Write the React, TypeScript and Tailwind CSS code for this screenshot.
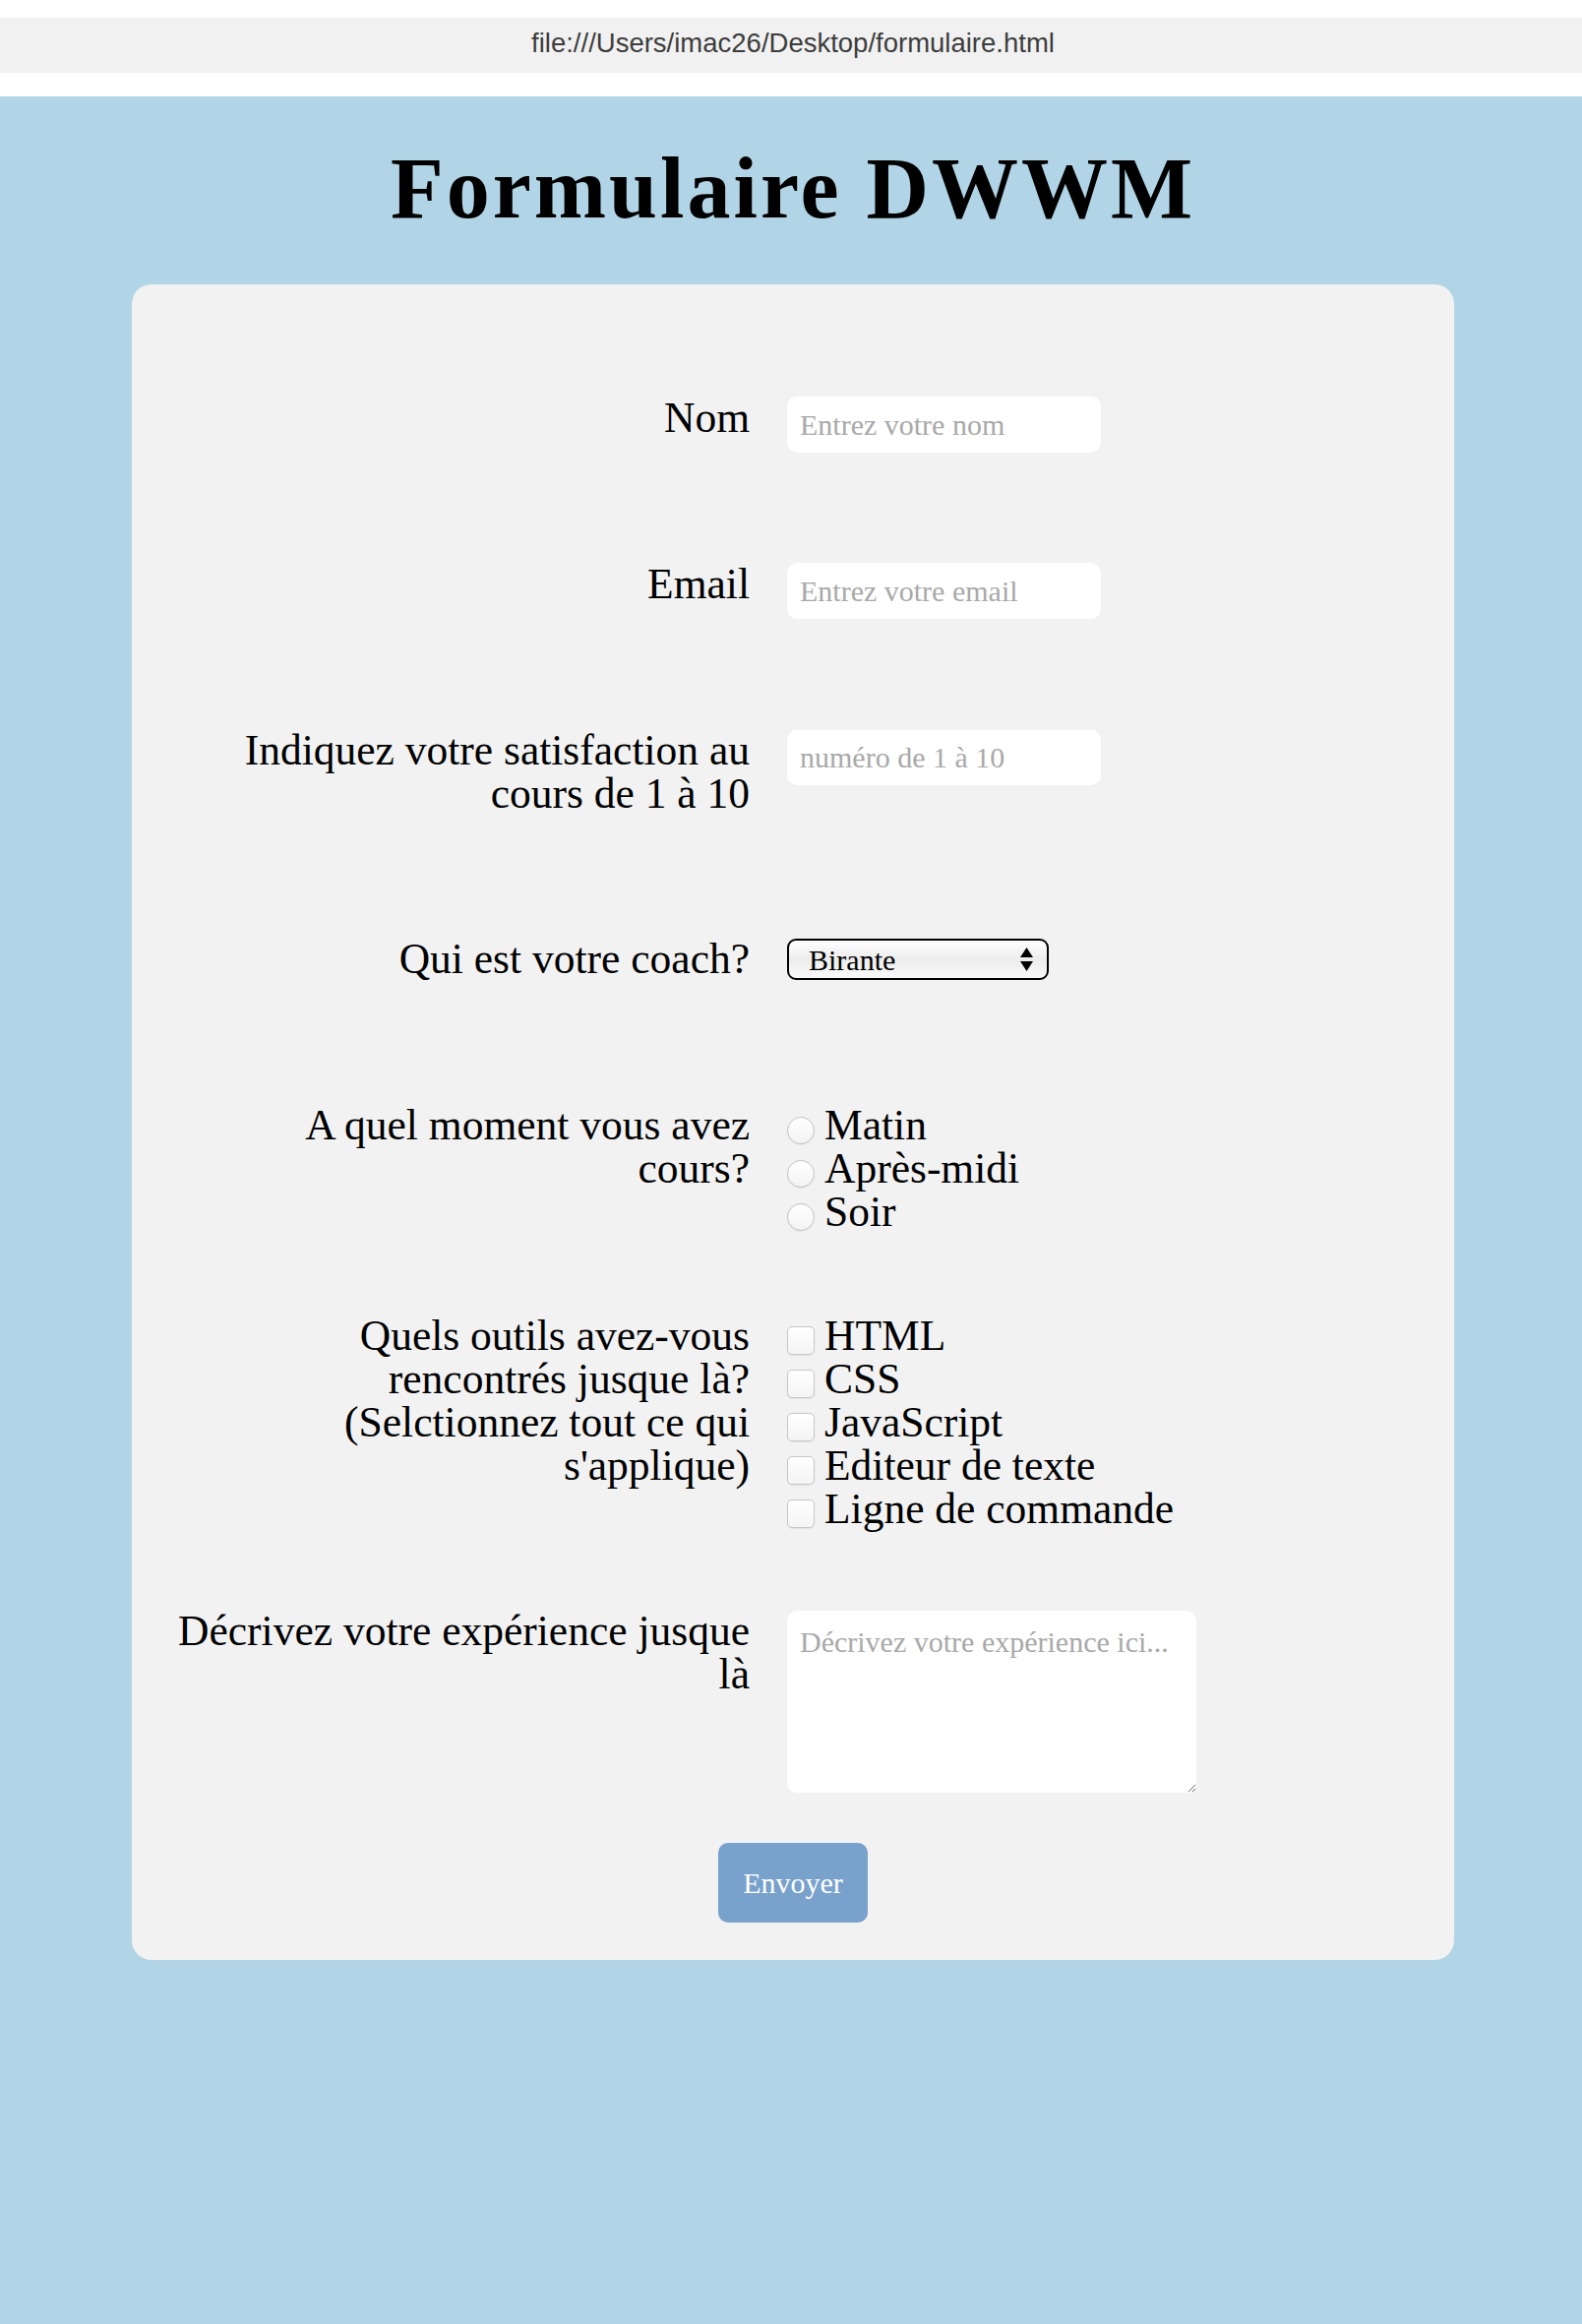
import React from "react";

const Row = ({ label, className, children }: { label: React.ReactNode; className: string; children: React.ReactNode }) => {
    return (
        <div className={"flex items-start gap-[38px] " + className}>
            <label className="w-[600px] ml-[28px] shrink-0 text-right text-[43.5px] leading-[44px] text-black">{label}</label>
            <div>{children}</div>
        </div>
    )
}

const Radio = ({ text }: { text: string }) => {
    return (
        <label className="flex items-start text-[43.5px] leading-[44px]">
            <span className="mt-[14px] w-[28px] h-[28px] shrink-0 rounded-full border border-[#c2c2c2] bg-linear-to-b from-white to-[#f3f3f3] shadow-[0_1px_1px_rgba(0,0,0,0.06)]" />
            <span className="ml-[10px]">{text}</span>
        </label>
    )
}

const Check = ({ text }: { text: string }) => {
    return (
        <label className="flex items-start text-[43.5px] leading-[44px] whitespace-nowrap">
            <span className="mt-[13px] w-[28px] h-[29px] shrink-0 rounded-[5px] border border-[#c6c6c6] bg-linear-to-b from-white to-[#f4f4f4] shadow-[0_1px_1px_rgba(0,0,0,0.06)]" />
            <span className="ml-[10px]">{text}</span>
        </label>
    )
}

const App = () => {
    return (
        <div className="min-h-[2362px] bg-[#b1d5e6] font-['Liberation_Serif',serif] text-black">

            <div className="bg-white pt-[18px] pb-[24px]">
                <div className="h-[56px] bg-[#f1f1f1] flex items-center justify-center pl-[4px] pb-[4px] text-[27.5px] font-['Liberation_Sans',sans-serif] text-[#3d3d3d]">
                    file:///Users/imac26/Desktop/formulaire.html
                </div>
            </div>

            <div className="w-[1344px] ml-[134px] pt-[50px]">
                <h1 className="text-center text-[88px] leading-none font-bold tracking-[3px]">Formulaire DWWM</h1>

                <form className="mt-[53px] bg-[#f2f2f2] rounded-[20px] pt-[113px] pb-[38px]">

                    <Row label="Nom" className="mb-[111px]">
                        <input placeholder="Entrez votre nom" className="mt-[1px] w-[319px] h-[57px] rounded-[10px] bg-white px-[13px] text-[30px] outline-none placeholder:text-[#a9a9a9]" />
                    </Row>

                    <Row label="Email" className="mb-[111px]">
                        <input placeholder="Entrez votre email" className="mt-[1px] w-[319px] h-[57px] rounded-[10px] bg-white px-[13px] text-[30px] outline-none placeholder:text-[#a9a9a9]" />
                    </Row>

                    <Row label={<>Indiquez votre satisfaction au<br />cours de 1 à 10</>} className="mb-[124px]">
                        <input placeholder="numéro de 1 à 10" className="mt-[2px] w-[319px] h-[56px] rounded-[10px] bg-white px-[13px] text-[30px] outline-none placeholder:text-[#a9a9a9]" />
                    </Row>

                    <Row label="Qui est votre coach?" className="mb-[125px]">
                        <div className="mt-[2px] w-[266px] h-[42px] rounded-[9px] border-[2.5px] border-black bg-linear-to-b from-white via-[#ececec] to-[#fafafa] flex items-center justify-between pl-[20px] pr-[13px] text-[30px] leading-none">
                            <span className="pt-[1px]">Birante</span>
                            <svg width="15" height="26" viewBox="0 0 15 26">
                                <path d="M7.5 1 L14 11 L1 11 Z" fill="#000" />
                                <path d="M1 15 L14 15 L7.5 25 Z" fill="#000" />
                            </svg>
                        </div>
                    </Row>

                    <Row label={<>A quel moment vous avez<br />cours?</>} className="mb-[82px]">
                        <Radio text="Matin" />
                        <Radio text="Après-midi" />
                        <Radio text="Soir" />
                    </Row>

                    <Row label={<>Quels outils avez-vous<br />rencontrés jusque là?<br />(Selctionnez tout ce qui<br />s'applique)</>} className="mb-[80px]">
                        <Check text="HTML" />
                        <Check text="CSS" />
                        <Check text="JavaScript" />
                        <Check text="Editeur de texte" />
                        <Check text="Ligne de commande" />
                    </Row>

                    <Row label={<>Décrivez votre expérience jusque<br />là</>} className="">
                        <textarea placeholder="Décrivez votre expérience ici..." className="block mt-[2px] w-[416px] h-[185px] rounded-[10px] bg-white pt-[9px] px-[13px] text-[30px] outline-none placeholder:text-[#a9a9a9]" />
                    </Row>

                    <button type="button" className="block mx-auto mt-[51px] w-[152px] h-[81px] rounded-[10px] bg-[#78a1cc] text-white text-[30px]">Envoyer</button>
                </form>
            </div>

        </div>
    )
}

export default App
